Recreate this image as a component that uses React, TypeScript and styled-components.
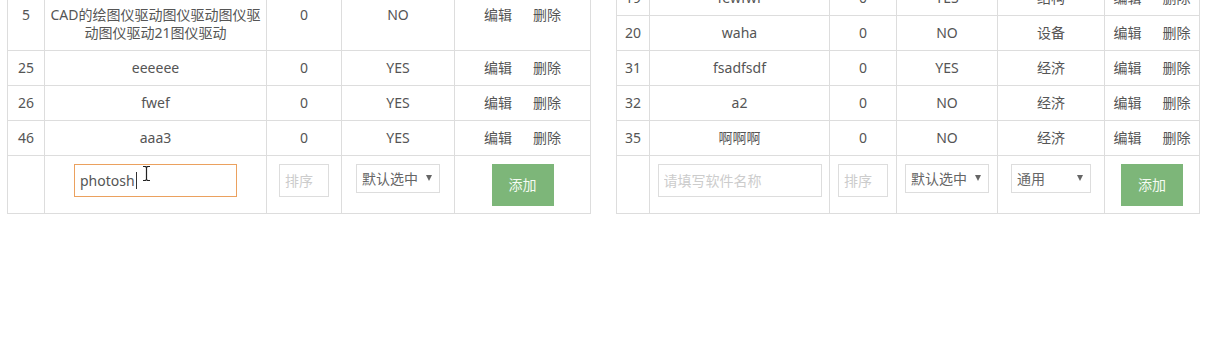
import React from 'react';
import styled, { createGlobalStyle } from 'styled-components';

interface Row {
  id: string;
  name: string;
  sort: string;
  checked: string;
  type?: string;
}

const GlobalStyle = createGlobalStyle`
  body {
    margin: 0;
    background: #fff;
    font-family: "Noto Sans", "Noto Sans CJK SC", sans-serif;
    overflow: hidden;
  }
`;

const Page = styled.div`
  display: flex;
  align-items: flex-end;
  gap: 25px;
  padding-left: 7px;
  margin-top: -20px;
`;

const Table = styled.table<{ $width: number }>`
  width: ${(p) => p.$width}px;
  table-layout: fixed;
  border-collapse: collapse;
  border: 1px solid #ddd;
  font-size: 14px;
  color: #555;
`;

const Td = styled.td`
  border: 1px solid #ddd;
  padding: 8px 4px;
  line-height: 18px;
  text-align: center;
  vertical-align: top;
  word-break: break-all;
`;

const AddTd = styled(Td)`
  padding: 8px 4px 7px;
`;

const Actions = styled.div`
  display: flex;
  justify-content: center;
  gap: 21px;
  white-space: nowrap;
`;

const Link = styled.span`
  color: #555;
  cursor: pointer;
`;

const Input = styled.input<{ $width: number }>`
  display: block;
  margin: 0 auto;
  box-sizing: border-box;
  width: ${(p) => p.$width}px;
  height: 33px;
  padding: 0 5px;
  border: 1px solid #ddd;
  outline: none;
  font: inherit;
  font-size: 14px;
  color: #555;
  background: #fff;
  &::placeholder {
    color: #ccc;
  }
`;

const FocusInput = styled.div<{ $width: number }>`
  position: relative;
  display: flex;
  align-items: center;
  margin: 0 auto;
  box-sizing: border-box;
  width: ${(p) => p.$width}px;
  height: 33px;
  padding: 0 5px;
  border: 1px solid #eba15f;
  font-size: 14px;
  color: #555;
  text-align: left;
`;

const Caret = styled.span`
  display: inline-block;
  width: 1px;
  height: 17px;
  margin-left: 1px;
  background: #333;
`;

const Pointer = styled.svg`
  position: absolute;
  left: 67px;
  top: 0;
`;

const Select = styled.div<{ $width: number }>`
  display: flex;
  align-items: center;
  justify-content: space-between;
  box-sizing: border-box;
  margin: 0 auto;
  width: ${(p) => p.$width}px;
  height: 29px;
  padding: 0 7px 0 5px;
  border: 1px solid #ddd;
  font-size: 14px;
  color: #666;
  white-space: nowrap;
`;

const Arrow = styled.span`
  width: 0;
  height: 0;
  border-left: 3px solid transparent;
  border-right: 3px solid transparent;
  border-top: 6px solid #666;
  margin-top: -2px;
`;

const AddButton = styled.button`
  display: block;
  margin: 0 auto;
  width: 62px;
  height: 42px;
  border: none;
  background: #7db679;
  color: #f4fbf3;
  font: inherit;
  font-size: 14px;
  cursor: pointer;
`;

const leftRows: Row[] = [
  { id: '5', name: 'CAD的绘图仪驱动图仪驱动图仪驱动图仪驱动21图仪驱动', sort: '0', checked: 'NO' },
  { id: '25', name: 'eeeeee', sort: '0', checked: 'YES' },
  { id: '26', name: 'fwef', sort: '0', checked: 'YES' },
  { id: '46', name: 'aaa3', sort: '0', checked: 'YES' },
];

const rightRows: Row[] = [
  { id: '19', name: 'fewfwf', sort: '0', checked: 'YES', type: '结构' },
  { id: '20', name: 'waha', sort: '0', checked: 'NO', type: '设备' },
  { id: '31', name: 'fsadfsdf', sort: '0', checked: 'YES', type: '经济' },
  { id: '32', name: 'a2', sort: '0', checked: 'NO', type: '经济' },
  { id: '35', name: '啊啊啊', sort: '0', checked: 'NO', type: '经济' },
];

const RowActions = () => (
  <Actions>
    <Link>编辑</Link>
    <Link>删除</Link>
  </Actions>
);

const App = () => {
  return (
    <>
      <GlobalStyle />
      <Page>
        <Table $width={584}>
          <colgroup>
            <col style={{ width: 37 }} />
            <col style={{ width: 222 }} />
            <col style={{ width: 75 }} />
            <col style={{ width: 113 }} />
            <col style={{ width: 136 }} />
          </colgroup>
          <tbody>
            {leftRows.map((row) => (
              <tr key={row.id}>
                <Td>{row.id}</Td>
                <Td>{row.name}</Td>
                <Td>{row.sort}</Td>
                <Td>{row.checked}</Td>
                <Td><RowActions /></Td>
              </tr>
            ))}
            <tr>
              <AddTd />
              <AddTd>
                <FocusInput $width={163}>
                  photosh<Caret />
                  <Pointer width="9" height="17" viewBox="0 0 9 17">
                    <path d="M1 1.5h2.5L4.5 2.5L5.5 1.5H8M4.5 2.5V14.5M1 15.5h2.5L4.5 14.5L5.5 15.5H8" fill="none" stroke="#222" strokeWidth="1.2" />
                  </Pointer>
                </FocusInput>
              </AddTd>
              <AddTd><Input $width={50} placeholder="排序" /></AddTd>
              <AddTd>
                <Select $width={84}>默认选中<Arrow /></Select>
              </AddTd>
              <AddTd><AddButton>添加</AddButton></AddTd>
            </tr>
          </tbody>
        </Table>
        <Table $width={584}>
          <colgroup>
            <col style={{ width: 33 }} />
            <col style={{ width: 180 }} />
            <col style={{ width: 67 }} />
            <col style={{ width: 101 }} />
            <col style={{ width: 107 }} />
            <col style={{ width: 95 }} />
          </colgroup>
          <tbody>
            {rightRows.map((row) => (
              <tr key={row.id}>
                <Td>{row.id}</Td>
                <Td>{row.name}</Td>
                <Td>{row.sort}</Td>
                <Td>{row.checked}</Td>
                <Td>{row.type}</Td>
                <Td><RowActions /></Td>
              </tr>
            ))}
            <tr>
              <AddTd />
              <AddTd><Input $width={164} placeholder="请填写软件名称" /></AddTd>
              <AddTd><Input $width={50} placeholder="排序" /></AddTd>
              <AddTd>
                <Select $width={84}>默认选中<Arrow /></Select>
              </AddTd>
              <AddTd>
                <Select $width={80}>通用<Arrow /></Select>
              </AddTd>
              <AddTd><AddButton>添加</AddButton></AddTd>
            </tr>
          </tbody>
        </Table>
      </Page>
    </>
  );
};

export default App;
